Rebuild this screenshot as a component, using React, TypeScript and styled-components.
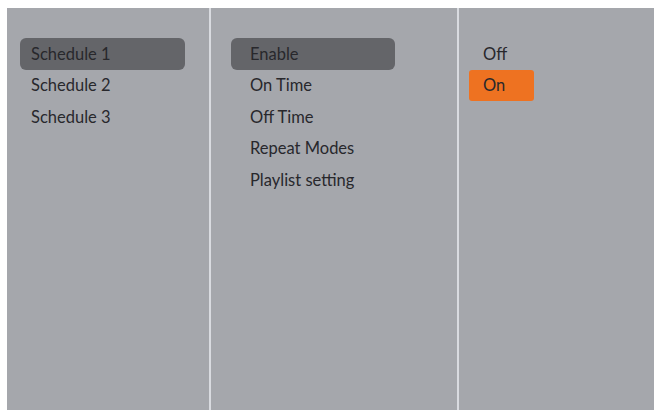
import styled, { createGlobalStyle } from "styled-components";

const GlobalStyle = createGlobalStyle`
  html, body {
    margin: 0;
    padding: 0;
    background: #ffffff;
  }
  body {
    font-family: Lato, "Open Sans", "Liberation Sans", sans-serif;
  }
`;

const scheduleItems = ["Schedule 1", "Schedule 2", "Schedule 3"];
const settingItems = ["Enable", "On Time", "Off Time", "Repeat Modes", "Playlist setting"];
const valueItems = ["Off", "On"];

function App() {
  return (
    <>
      <GlobalStyle />
      <Screen>
        <Panel>
          <Column $padLeft={13}>
            <List>
              {scheduleItems.map((label, i) => (
                <Item key={label} $width={165} $indent={11} $variant={i === 0 ? "dark" : "none"}>
                  {label}
                </Item>
              ))}
            </List>
          </Column>
          <Divider />
          <Column $padLeft={20}>
            <List>
              {settingItems.map((label, i) => (
                <Item key={label} $width={164} $indent={19} $variant={i === 0 ? "dark" : "none"}>
                  {label}
                </Item>
              ))}
            </List>
          </Column>
          <Divider />
          <Column $padLeft={10}>
            <List>
              {valueItems.map((label) => (
                <Item key={label} $width={65} $indent={14} $variant={label === "On" ? "orange" : "none"}>
                  {label}
                </Item>
              ))}
            </List>
          </Column>
        </Panel>
      </Screen>
    </>
  );
}

export default App;

const Screen = styled.div`
  width: 654px;
  height: 412px;
  padding: 8px 0 2px 7px;
  box-sizing: border-box;
  background: #ffffff;
`;

const Panel = styled.div`
  display: grid;
  grid-template-columns: 202px 2px 246px 2px 1fr;
  height: 100%;
  background: #a5a7ac;
`;

const Column = styled.div<{ $padLeft: number }>`
  padding: 30px 0 0 ${(p) => p.$padLeft}px;
`;

const Divider = styled.div`
  background: #d9dbe0;
  width: 2px;
`;

const List = styled.div`
  display: flex;
  flex-direction: column;
`;

const Item = styled.div<{ $width: number; $indent: number; $variant: "dark" | "orange" | "none" }>`
  width: ${(p) => p.$width}px;
  height: 31.5px;
  box-sizing: border-box;
  padding-left: ${(p) => p.$indent}px;
  display: flex;
  align-items: center;
  font-size: 16.5px;
  color: #28282c;
  border-radius: ${(p) => (p.$variant === "orange" ? "3px" : "6px")};
  background: ${(p) =>
    p.$variant === "dark" ? "#646569" : p.$variant === "orange" ? "#ee7221" : "transparent"};
`;
